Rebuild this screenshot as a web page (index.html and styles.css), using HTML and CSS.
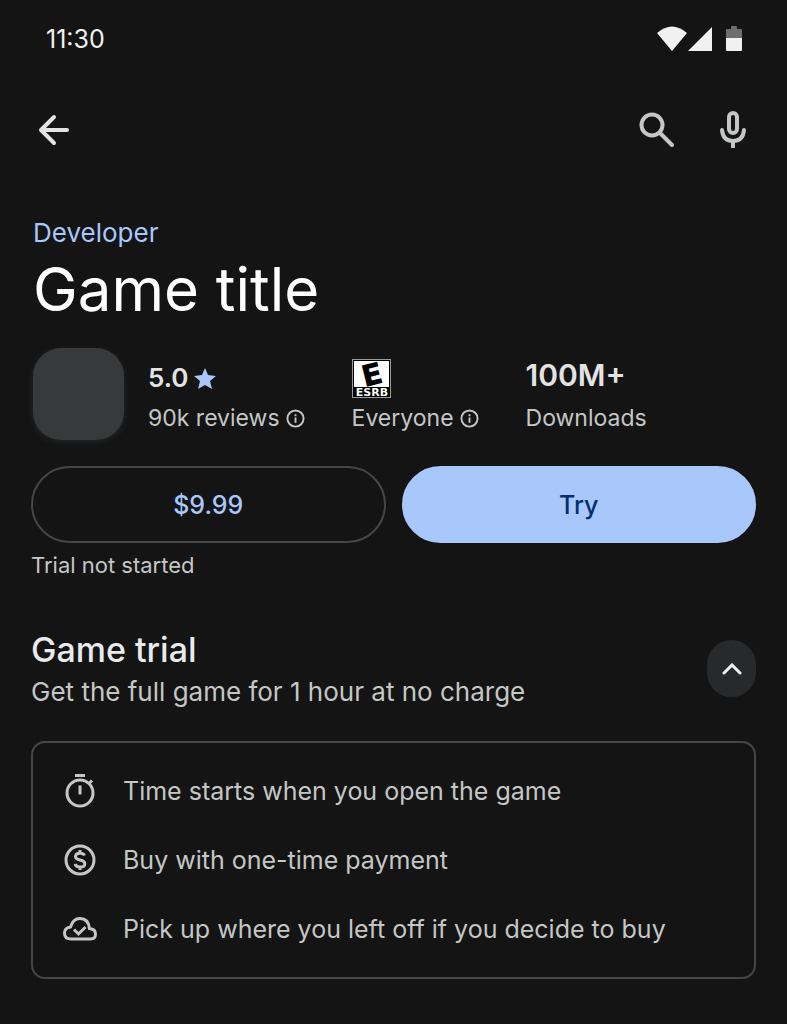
FILE: index.html
```html
<!DOCTYPE html>
<html lang="en">
<head>
    <meta charset="UTF-8">
    <meta name="viewport" content="width=device-width, initial-scale=1.0">
    <title>Game title</title>
    <link rel="stylesheet" href="styles.css">
</head>
<body>

    <div class="status-bar">
        <span class="clock">11:30</span>
        <svg class="status-icons" width="86" height="26" viewBox="0 0 86 26">
            <path fill="#f1f1f1" d="M0 7Q15-6 30 7L15 25Z"/>
            <path fill="#f1f1f1" d="M31 25L55 1V25Z"/>
            <path fill="#6e6e6e" d="M69 12V4q0-1 1-1h4V1q0-1 1-1h4q1 0 1 1v2h4q1 0 1 1v8z"/>
            <path fill="#f1f1f1" d="M69 12h16v12q0 1-1 1H70q-1 0-1-1z"/>
        </svg>
    </div>

    <header class="toolbar">
        <button class="icon-button back" aria-label="Back">
            <svg width="32" height="32" viewBox="0 0 32 32" fill="none" stroke="#e3e3e3" stroke-width="4" stroke-linecap="round" stroke-linejoin="round">
                <path d="M29 16H3M16 3L3 16L16 29"/>
            </svg>
        </button>
        <button class="icon-button" aria-label="Search">
            <svg width="36" height="36" viewBox="0 0 36 36" fill="none" stroke="#c4c7c5" stroke-width="4" stroke-linecap="round">
                <circle cx="13" cy="13" r="10.500"/>
                <path d="M21 21L33 33"/>
            </svg>
        </button>
        <button class="icon-button" aria-label="Voice search">
            <svg width="28" height="38" viewBox="0 0 28 38" fill="none" stroke="#c4c7c5" stroke-width="4" stroke-linecap="round">
                <rect x="10" y="2" width="8" height="20" rx="4"/>
                <path d="M3 19Q4 30 14 30Q24 30 25 19"/>
                <path d="M14 30V37" stroke-linecap="butt"/>
            </svg>
        </button>
    </header>

    <main class="content">
        <a class="developer" href="#">Developer</a>
        <h1>Game title</h1>

        <div class="info">
            <div class="app-icon"></div>
            <div class="stat">
                <div class="stat-value">5.0
                    <svg width="22" height="21" viewBox="0 0 22 21" fill="#a8c7fa">
                        <path d="M11 0L14 7L22 8L16 13L18 21L11 17L4 21L6 13L0 8L8 7Z"/>
                    </svg>
                </div>
                <div class="stat-label">90k reviews
                    <svg width="19" height="19" viewBox="0 0 20 20" fill="none" stroke="#c4c7c5" stroke-width="2">
                        <circle cx="10" cy="10" r="8.500"/>
                        <path d="M10 9V14.500M10 5.500V7.500"/>
                    </svg>
                </div>
            </div>
            <div class="stat">
                <div class="stat-value">
                    <svg class="esrb" width="39" height="39" viewBox="0 0 39 39">
                        <rect width="39" height="39" fill="#9a9a9a"/>
                        <rect x="1" y="1" width="37" height="37" fill="#000"/>
                        <rect x="2" y="2" width="35" height="26" fill="#fff"/>
                        <text class="esrb-letter" x="20" y="26" text-anchor="middle" transform="rotate(-14 20 15)">E</text>
                        <text class="esrb-name" x="20" y="37" text-anchor="middle">ESRB</text>
                    </svg>
                </div>
                <div class="stat-label">Everyone
                    <svg width="19" height="19" viewBox="0 0 20 20" fill="none" stroke="#c4c7c5" stroke-width="2">
                        <circle cx="10" cy="10" r="8.500"/>
                        <path d="M10 9V14.500M10 5.500V7.500"/>
                    </svg>
                </div>
            </div>
            <div class="stat">
                <div class="stat-value downloads">100M+</div>
                <div class="stat-label">Downloads</div>
            </div>
        </div>

        <div class="actions">
            <button class="action">$9.99</button>
            <button class="action primary">Try</button>
        </div>
        <p class="trial-status">Trial not started</p>

        <section class="trial">
            <div class="trial-header">
                <div>
                    <h2>Game trial</h2>
                    <p class="subtitle">Get the full game for 1 hour at no charge</p>
                </div>
                <button class="collapse" aria-label="Collapse">
                    <svg width="20" height="12" viewBox="0 0 20 12" fill="none" stroke="#f1f1f1" stroke-width="3" stroke-linecap="round">
                        <path d="M2 10L10 2L18 10"/>
                    </svg>
                </button>
            </div>

            <ul class="card">
                <li>
                    <svg width="36" height="36" viewBox="0 0 36 36" fill="none" stroke="#c4c7c5" stroke-width="3">
                        <circle cx="18" cy="20" r="13"/>
                        <path d="M13 2.500H23M18 12.500V21.500M26.500 11L30 7.500"/>
                    </svg>
                    Time starts when you open the game
                </li>
                <li>
                    <svg width="36" height="36" viewBox="0 0 36 36" fill="none" stroke="#c4c7c5" stroke-width="3">
                        <circle cx="18" cy="18" r="14"/>
                        <path d="M22.500 13.500Q21.500 11.200 18 11.200Q13.500 11.200 13.500 14.500Q13.500 17 18 18Q22.800 19 22.800 22Q22.800 25 18 25Q14 25 13 22M18 8V11M18 25V28"/>
                    </svg>
                    Buy with one-time payment
                </li>
                <li>
                    <svg width="36" height="36" viewBox="0 0 36 36" fill="none" stroke="#c4c7c5" stroke-width="3">
                        <path d="M9 28Q2.500 28 2.500 22Q2.500 17 8.500 16Q11 7.500 18 7.500Q26.500 7.500 27.500 17.500Q33.500 18 33.500 23Q33.500 28 28.500 28Z"/>
                        <path d="M12 18.500L16.500 23L23.500 16"/>
                    </svg>
                    Pick up where you left off if you decide to buy
                </li>
            </ul>
        </section>
    </main>

</body>
</html>
```
FILE: styles.css
```css
/* Base Styles */
* {
    box-sizing: border-box;
}
body {
    margin: 0;
    background-color: #141414;
    color: #c4c7c5;
    font-family: Inter, Roboto, sans-serif;
    font-size: 26px;
    line-height: 32px;
}
h1, h2, p, ul {
    margin: 0;
    padding: 0;
}
button {
    padding: 0;
    border: none;
    background: none;
    font: inherit;
    cursor: pointer;
}
svg {
    display: block;
    flex: none;
}

/* Top bars */
.status-bar {
    display: flex;
    justify-content: space-between;
    align-items: center;
    padding: 24px 44px 0 46px;
    height: 54px;
    color: #f1f1f1;
    font-size: 25px;
}
.toolbar {
    display: flex;
    align-items: center;
    gap: 28px;
    margin-top: 52px;
    padding: 0 30px;
    height: 48px;
}
.icon-button {
    display: flex;
    align-items: center;
    justify-content: center;
    width: 48px;
    height: 48px;
}
.back {
    margin-right: auto;
}

/* Game details */
.content {
    padding: 63px 31px 46px;
}
.developer {
    display: block;
    margin-left: 2px;
    color: #a8c7fa;
    text-decoration: none;
}
h1 {
    margin-left: 2px;
    color: #fff;
    font-size: 60px;
    font-weight: 400;
    line-height: 80px;
}
.info {
    display: flex;
    align-items: flex-start;
    margin: 19px 2px 26px;
}
.app-icon {
    width: 91px;
    height: 92px;
    margin-right: 24px;
    border-radius: 28px;
    background-color: #38393a;
    box-shadow: 0 2px 6px #242526;
}
.stat {
    margin-right: 47px;
}
.stat-value {
    display: flex;
    align-items: center;
    gap: 6px;
    height: 54px;
    padding-top: 6px;
    color: #e3e3e3;
    font-weight: 600;
}
.downloads {
    padding-top: 0;
    font-size: 30px;
}
.stat-label {
    display: flex;
    align-items: center;
    gap: 6px;
    font-size: 23px;
}
.esrb {
    overflow: visible;
}
.esrb-letter {
    font: 900 30px Inter, sans-serif;
}
.esrb-name {
    fill: #fff;
    font: bold 11px "DejaVu Sans", sans-serif;
}

/* Purchase buttons */
.actions {
    display: flex;
    gap: 16px;
}
.action {
    flex: 1;
    height: 77px;
    border: 2px solid #444746;
    border-radius: 39px;
    color: #a8c7fa;
    font-size: 25px;
    font-weight: 500;
}
.primary {
    border-color: #a8c7fa;
    background-color: #a8c7fa;
    color: #062e6f;
}
.trial-status {
    margin-top: 6px;
    font-size: 22px;
}

/* Game trial */
.trial {
    margin-top: 47px;
}
.trial-header {
    display: flex;
    justify-content: space-between;
    align-items: flex-start;
}
h2 {
    color: #e8eaed;
    font-size: 34px;
    font-weight: 500;
    line-height: 44px;
}
.subtitle {
    line-height: 40px;
}
.collapse {
    display: flex;
    align-items: center;
    justify-content: center;
    width: 49px;
    height: 57px;
    margin-top: 12px;
    border-radius: 25px;
    background-color: #28292a;
}
.card {
    display: flex;
    flex-direction: column;
    gap: 33px;
    margin-top: 29px;
    padding: 30px 29px;
    border: 2px solid #444746;
    border-radius: 14px;
    font-size: 25px;
    list-style: none;
}
.card li {
    display: flex;
    align-items: center;
    gap: 25px;
    height: 36px;
}
```
